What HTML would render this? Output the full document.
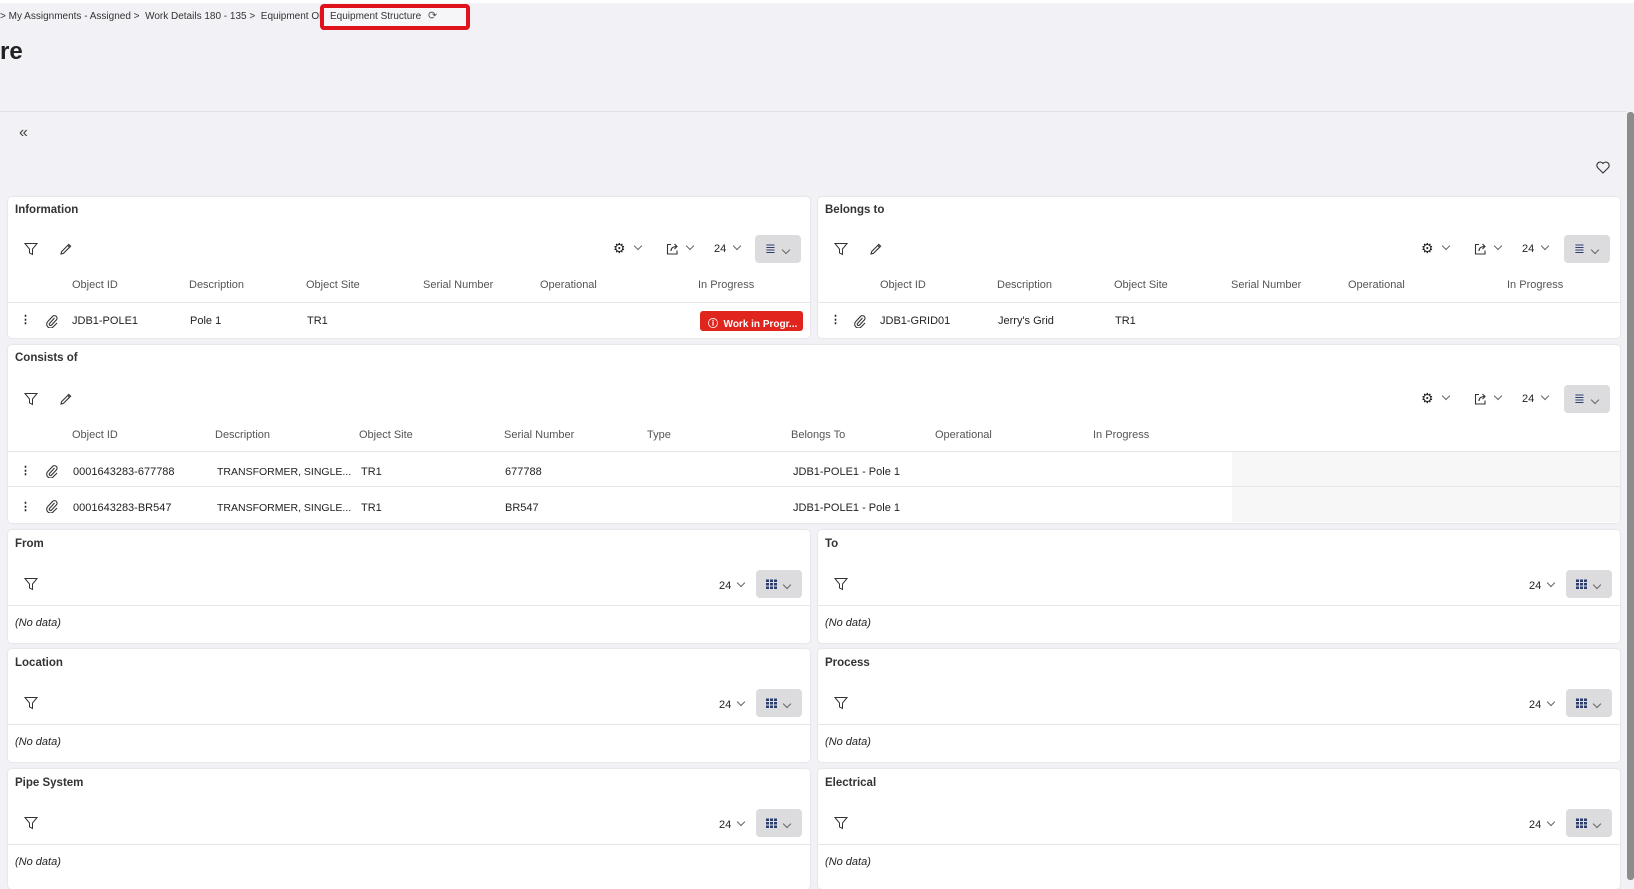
<!DOCTYPE html>
<html><head><meta charset="utf-8"><style>
*{box-sizing:border-box;margin:0;padding:0}
body{width:1634px;height:880px;overflow:hidden;background:#f2f1f5;font-family:"Liberation Sans",sans-serif;font-size:11px;color:#222;position:relative}
.a{position:absolute;white-space:nowrap}
.p{position:absolute;background:#fff;border-radius:4px;box-shadow:0 0 2px rgba(0,0,0,.12)}
.t{position:absolute;left:7px;font-weight:bold;font-size:11.5px;color:#333}
.h{color:#555}
.ln{position:absolute;left:0;right:0;height:1px;background:#e6e5ea}
.btn{position:absolute;width:46px;height:28px;background:#dcdcdf;border-radius:4px}
.chev{display:inline-block;width:6px;height:6px;border-right:1px solid #666;border-bottom:1px solid #666;transform:rotate(45deg)}
.nd{font-style:italic}
</style></head><body>
<svg width="0" height="0" style="position:absolute">
<defs>
<symbol id="clip" viewBox="0 0 14 14"><path d="M9.5 4 L4.5 9.5 A1.3 1.3 0 0 0 6.3 11.3 L11.5 5.8 A2.6 2.6 0 0 0 7.8 2.2 L2.8 7.5 A3.8 3.8 0 0 0 8.2 12.9 L12 9" fill="none" stroke="#333" stroke-width="1.1"/></symbol>
<symbol id="pen" viewBox="0 0 14 14"><path d="M2 12 L2.6 9.6 L9.8 2.4 L11.6 4.2 L4.4 11.4 Z M8.8 3.4 L10.6 5.2" fill="none" stroke="#333" stroke-width="1.1"/></symbol>
<symbol id="exp" viewBox="0 0 14 14"><path d="M6 2.5 H2.5 V12 H12 V8.5 M6 9 C6 6 8 4.5 12 4.5 M9.5 2 L12 4.5 L9.5 7" fill="none" stroke="#333" stroke-width="1.1"/></symbol>
<symbol id="fil" viewBox="0 0 14 14"><path d="M1 1.5H13L8.5 7V12.5L5.5 11V7Z" fill="none" stroke="#333"/></symbol>
</defs></svg>
<div class="a" style="left:0;top:0;width:1634px;height:3px;background:#fff"></div>
<div class="a" style="left:0;top:11px;font-size:10px;color:#333">&gt; My Assignments - Assigned &gt; &nbsp;Work Details 180 - 135 &gt; &nbsp;Equipment Object</div>
<div class="a" style="left:320px;top:4px;width:150px;height:26px;border:4px solid #e0121b;border-radius:4px;background:#f6f6f8"></div>
<div class="a" style="left:330px;top:11px;font-size:10px;color:#333">Equipment Structure</div>
<div class="a" style="left:428px;top:9px;font-size:11px;color:#555">⟳</div>
<div class="a" style="left:0;top:38px;font-size:24px;font-weight:bold;color:#222">re</div>
<div class="a" style="left:0;top:111px;width:1626px;height:1px;background:#e0dfe4"></div>
<div class="a" style="left:19px;top:124px;font-size:16px;color:#444">«</div>
<svg class="a" style="left:1596px;top:161px" width="14" height="13" viewBox="0 0 14 13"><path d="M7 12 L1.5 6.5 A3 3 0 0 1 7 2.5 A3 3 0 0 1 12.5 6.5 Z" fill="none" stroke="#333" stroke-width="1.1"/></svg>
<div class="a" style="left:1627px;top:112px;width:7px;height:768px;background:#8c8c8c;border-radius:3px"></div>

<!-- Information -->
<div class="p" style="left:8px;top:197px;width:802px;height:141px">
<div class="t" style="top:7px">Information</div>
<svg class="a" style="left:16px;top:45px" width="14" height="14"><use href="#fil"/></svg>
<svg class="a" style="left:51px;top:45px" width="14" height="14"><use href="#pen"/></svg>
<div class="a" style="left:605px;top:43px;font-size:14px">⚙</div><div class="a" style="left:627px;top:43px"><span class="chev"></span></div>
<svg class="a" style="left:657px;top:45px" width="14" height="14"><use href="#exp"/></svg><div class="a" style="left:679px;top:43px"><span class="chev"></span></div>
<div class="a" style="left:706px;top:46px">24</div><div class="a" style="left:726px;top:43px"><span class="chev"></span></div>
<div class="btn" style="left:747px;top:38px"><div class="a" style="left:10px;top:6px;color:#2d3e6e;font-size:13px">≣</div><div class="a" style="left:28px;top:9px"><span class="chev"></span></div></div>
<div class="a h" style="left:64px;top:82px">Object ID</div><div class="a h" style="left:181px;top:82px">Description</div><div class="a h" style="left:298px;top:82px">Object Site</div><div class="a h" style="left:415px;top:82px">Serial Number</div><div class="a h" style="left:532px;top:82px">Operational</div><div class="a h" style="left:690px;top:82px">In Progress</div>
<div class="ln" style="top:105px"></div>
<div class="a" style="left:12px;top:116px;font-weight:bold">⋮</div><svg class="a" style="left:37px;top:117px" width="14" height="14"><use href="#clip"/></svg>
<div class="a" style="left:64px;top:118px">JDB1-POLE1</div><div class="a" style="left:182px;top:118px">Pole 1</div><div class="a" style="left:299px;top:118px">TR1</div>
<div class="a" style="left:692px;top:114px;width:103px;height:20px;background:#e0251f;border-radius:3px;color:#fff;font-weight:bold;font-size:10px;padding:4px 0 0 8px">ⓘ &nbsp;Work in Progr...</div>
</div>
<!-- Belongs to -->
<div class="p" style="left:818px;top:197px;width:802px;height:141px">
<div class="t" style="top:7px">Belongs to</div>
<svg class="a" style="left:16px;top:45px" width="14" height="14"><use href="#fil"/></svg>
<svg class="a" style="left:51px;top:45px" width="14" height="14"><use href="#pen"/></svg>
<div class="a" style="left:603px;top:43px;font-size:14px">⚙</div><div class="a" style="left:625px;top:43px"><span class="chev"></span></div>
<svg class="a" style="left:655px;top:45px" width="14" height="14"><use href="#exp"/></svg><div class="a" style="left:677px;top:43px"><span class="chev"></span></div>
<div class="a" style="left:704px;top:46px">24</div><div class="a" style="left:724px;top:43px"><span class="chev"></span></div>
<div class="btn" style="left:746px;top:38px"><div class="a" style="left:10px;top:6px;color:#2d3e6e;font-size:13px">≣</div><div class="a" style="left:28px;top:9px"><span class="chev"></span></div></div>
<div class="a h" style="left:62px;top:82px">Object ID</div><div class="a h" style="left:179px;top:82px">Description</div><div class="a h" style="left:296px;top:82px">Object Site</div><div class="a h" style="left:413px;top:82px">Serial Number</div><div class="a h" style="left:530px;top:82px">Operational</div><div class="a h" style="left:689px;top:82px">In Progress</div>
<div class="ln" style="top:105px"></div>
<div class="a" style="left:12px;top:116px;font-weight:bold">⋮</div><svg class="a" style="left:35px;top:117px" width="14" height="14"><use href="#clip"/></svg>
<div class="a" style="left:62px;top:118px">JDB1-GRID01</div><div class="a" style="left:180px;top:118px">Jerry's Grid</div><div class="a" style="left:297px;top:118px">TR1</div>
</div>
<!-- Consists of -->
<div class="p" style="left:8px;top:345px;width:1612px;height:178px">
<div class="t" style="top:7px">Consists of</div>
<svg class="a" style="left:16px;top:47px" width="14" height="14"><use href="#fil"/></svg>
<svg class="a" style="left:51px;top:47px" width="14" height="14"><use href="#pen"/></svg>
<div class="a" style="left:1413px;top:45px;font-size:14px">⚙</div><div class="a" style="left:1435px;top:45px"><span class="chev"></span></div>
<svg class="a" style="left:1465px;top:47px" width="14" height="14"><use href="#exp"/></svg><div class="a" style="left:1487px;top:45px"><span class="chev"></span></div>
<div class="a" style="left:1514px;top:48px">24</div><div class="a" style="left:1534px;top:45px"><span class="chev"></span></div>
<div class="btn" style="left:1556px;top:40px"><div class="a" style="left:10px;top:6px;color:#2d3e6e;font-size:13px">≣</div><div class="a" style="left:28px;top:9px"><span class="chev"></span></div></div>
<div class="a h" style="left:64px;top:84px">Object ID</div><div class="a h" style="left:207px;top:84px">Description</div><div class="a h" style="left:351px;top:84px">Object Site</div><div class="a h" style="left:496px;top:84px">Serial Number</div><div class="a h" style="left:639px;top:84px">Type</div><div class="a h" style="left:783px;top:84px">Belongs To</div><div class="a h" style="left:927px;top:84px">Operational</div><div class="a h" style="left:1085px;top:84px">In Progress</div>
<div class="ln" style="top:106px"></div>
<div class="a" style="left:1224px;top:107px;width:388px;height:70px;background:#f7f7f8"></div>
<div class="ln" style="top:141px"></div>
<div class="a" style="left:12px;top:119px;font-weight:bold">⋮</div><svg class="a" style="left:37px;top:119px" width="14" height="14"><use href="#clip"/></svg>
<div class="a" style="left:65px;top:121px">0001643283-677788</div><div class="a" style="left:209px;top:121px;font-size:10.5px">TRANSFORMER, SINGLE...</div><div class="a" style="left:353px;top:121px">TR1</div><div class="a" style="left:497px;top:121px">677788</div><div class="a" style="left:785px;top:121px">JDB1-POLE1 - Pole 1</div>
<div class="a" style="left:12px;top:155px;font-weight:bold">⋮</div><svg class="a" style="left:37px;top:154px" width="14" height="14"><use href="#clip"/></svg>
<div class="a" style="left:65px;top:157px">0001643283-BR547</div><div class="a" style="left:209px;top:157px;font-size:10.5px">TRANSFORMER, SINGLE...</div><div class="a" style="left:353px;top:157px">TR1</div><div class="a" style="left:497px;top:157px">BR547</div><div class="a" style="left:785px;top:157px">JDB1-POLE1 - Pole 1</div>
</div>

<div id="sp"></div>
<script>
var rows=[[530,"From","To"],[649,"Location","Process"],[769,"Pipe System","Electrical"]];
var h="";
rows.forEach(function(r){
 [[8,r[1]],[818,r[2]]].forEach(function(c){
  var ht=r[0]==769?120:113;
  h+='<div class="p" style="left:'+c[0]+'px;top:'+r[0]+'px;width:802px;height:'+ht+'px">'+
  '<div class="t" style="top:8px">'+c[1]+'</div>'+
  '<svg class="a" style="left:16px;top:47px" width="14" height="14"><use href="#fil"/></svg>'+
  '<div class="a" style="left:711px;top:50px">24</div><div class="a" style="left:730px;top:47px"><span class="chev"></span></div>'+
  '<div class="btn" style="left:748px;top:40px"><div class="a" style="left:10px;top:9px;width:11px;height:10px;background:repeating-linear-gradient(90deg,#2d3e6e 0 3px,transparent 3px 4px);-webkit-mask:repeating-linear-gradient(0deg,#000 0 2.5px,transparent 2.5px 3.5px)"></div><div class="a" style="left:28px;top:9px"><span class="chev"></span></div></div>'+
  '<div class="ln" style="top:75px"></div>'+
  '<div class="a nd" style="left:7px;top:87px">(No data)</div></div>';
 });
});
document.getElementById("sp").innerHTML=h;
</script>
</body></html>
